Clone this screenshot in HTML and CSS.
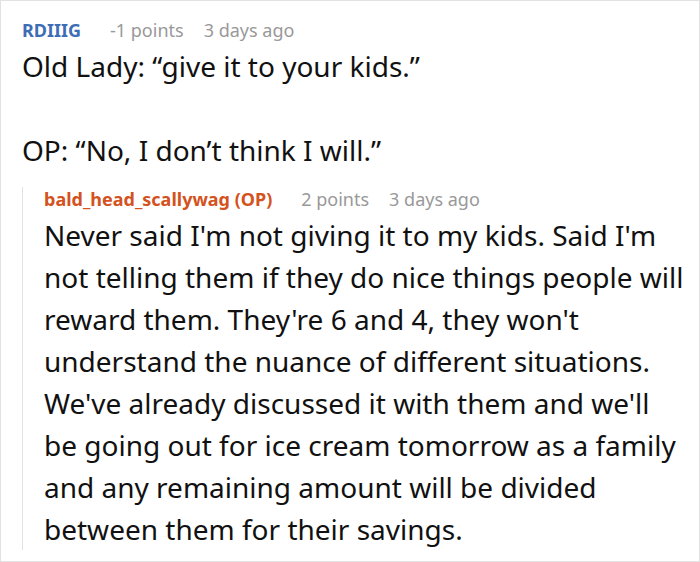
FILE: index.html
```html
<!DOCTYPE html>
<html>
<head>
<meta charset="utf-8">
<link rel="stylesheet" href="styles.css">
</head>
<body>
<div class="thread">
  <div class="comment">
    <div class="meta">
      <span class="user user-blue">RDIIIG</span>
      <span class="points">-1 points</span>
      <span class="time">3 days ago</span>
    </div>
    <div class="body">
      <p>Old Lady: “give it to your kids.”</p>
      <p>OP: “No, I don’t think I will.”</p>
    </div>
    <div class="reply">
      <div class="meta">
        <span class="user user-orange">bald_head_scallywag (OP)</span>
        <span class="points">2 points</span>
        <span class="time">3 days ago</span>
      </div>
      <div class="body">
        <p>Never said I'm not giving it to my kids. Said I'm not telling them if they do nice things people will reward them. They're 6 and 4, they won't understand the nuance of different situations. We've already discussed it with them and we'll be going out for ice cream tomorrow as a family and any remaining amount will be divided between them for their savings.</p>
      </div>
    </div>
  </div>
</div>
</body>
</html>
```
FILE: styles.css
```css
html, body {
  margin: 0;
  padding: 0;
  background: #ffffff;
}
.thread {
  box-sizing: border-box;
  width: 700px;
  height: 562px;
  border: 1px solid #e2e2e2;
  overflow: hidden;
  font-family: "Noto Sans", "Open Sans", sans-serif;
  color: #111111;
}
.comment {
  padding: 17px 0 0 21px;
}
.meta {
  display: flex;
  align-items: baseline;
  height: 24px;
  line-height: 24px;
  white-space: nowrap;
}
.user {
  font-weight: bold;
  font-size: 18px;
  margin-right: 29px;
}
.user-blue { color: #3d6db5; }
.user-orange { color: #d4521e; }
.points, .time {
  color: #999999;
  font-size: 18px;
}
.points { margin-right: 20px; }
.body {
  margin-top: 3px;
}
.body p {
  margin: 0 0 42px 0;
  font-size: 28px;
  line-height: 42px;
}
.body p:last-child { margin-bottom: 0; }
.reply {
  margin-top: 27px;
  border-left: 1px solid #e2e2e2;
  padding-left: 21px;
  padding-right: 12px;
}
.reply .meta {
  margin-top: -11px;
}
.reply .body {
  margin-top: 3px;
  margin-bottom: -7px;
}
```
